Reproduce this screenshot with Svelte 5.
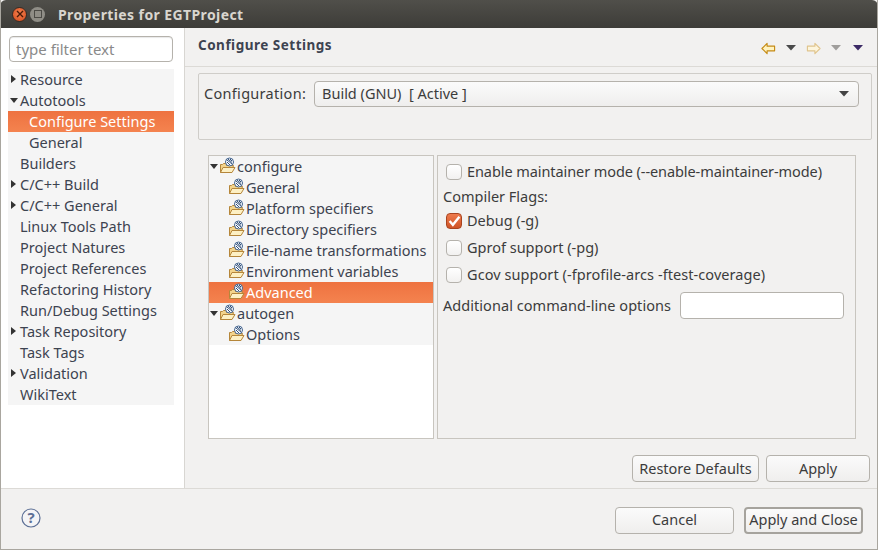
<script>
  const nav = [
    { label: "Resource", arrow: "right" },
    { label: "Autotools", arrow: "down" },
    { label: "Configure Settings", child: true, selected: true },
    { label: "General", child: true },
    { label: "Builders" },
    { label: "C/C++ Build", arrow: "right" },
    { label: "C/C++ General", arrow: "right" },
    { label: "Linux Tools Path" },
    { label: "Project Natures" },
    { label: "Project References" },
    { label: "Refactoring History" },
    { label: "Run/Debug Settings" },
    { label: "Task Repository", arrow: "right" },
    { label: "Task Tags" },
    { label: "Validation", arrow: "right" },
    { label: "WikiText" }
  ];

  const tools = [
    { label: "configure", root: true },
    { label: "General" },
    { label: "Platform specifiers" },
    { label: "Directory specifiers" },
    { label: "File-name transformations" },
    { label: "Environment variables" },
    { label: "Advanced", selected: true },
    { label: "autogen", root: true },
    { label: "Options" }
  ];
</script>

{#snippet folder()}
  <svg class="folder" width="17" height="17" viewBox="0 0 17 17">
    <path d="M1.5 15.5V7.5h2l1-1h3v2h7l-2 7z" fill="#f3d48c" stroke="#b5863a" />
    <path d="M1.5 15.5l2.5-5h12l-3 5z" fill="#fdf0c4" stroke="#b5863a" />
    <circle cx="10.5" cy="5" r="4" fill="#fff" stroke="#3d5f8c" />
    <path d="M8 3l5 4M9 2l4 3.5M8 5l3 3M11 2l2 2" stroke="#2f4f7a" stroke-width="1" />
  </svg>
{/snippet}

{#snippet arrowDown(color)}
  <svg class="arrow" width="10" height="6" viewBox="0 0 10 6"><path d="M0 0h10L5 5.5z" fill={color} /></svg>
{/snippet}

<div class="window">
  <header class="titlebar">
    <span class="wbtn close">
      <svg width="8" height="8" viewBox="0 0 8 8"><path d="M1 1l6 6M7 1l-6 6" stroke="#4a1a08" stroke-width="1.4" /></svg>
    </span>
    <span class="wbtn max"><i></i></span>
    <span class="title">Properties for EGTProject</span>
  </header>

  <div class="body">
    <aside class="side">
      <input class="filter" placeholder="type filter text" />
      <ul class="nav">
        {#each nav as item}
          <li class:child={item.child} class:selected={item.selected}>
            {#if item.arrow === "right"}
              <span class="twist right"></span>
            {:else if item.arrow === "down"}
              <span class="twist down"></span>
            {/if}
            {item.label}
          </li>
        {/each}
      </ul>
    </aside>

    <main class="content">
      <div class="heading">
        <h1>Configure Settings</h1>
        <div class="history">
          <svg width="15" height="13" viewBox="0 0 16 13"><path d="M1 6.5L6.5 1v3h8v5h-8v3z" fill="#fff3c0" stroke="#c58a12" stroke-width="1.2" stroke-linejoin="round" /></svg>
          {@render arrowDown("#4a4a4a")}
          <svg width="15" height="13" viewBox="0 0 16 13"><path d="M15 6.5L9.5 1v3h-8v5h8v3z" fill="#fdf5dc" stroke="#e0c48c" stroke-width="1.2" stroke-linejoin="round" /></svg>
          {@render arrowDown("#a09e9c")}
          <span class="menu">{@render arrowDown("#3c2a66")}</span>
        </div>
      </div>

      <section class="config">
        <span class="config-label">Configuration:</span>
        <div class="combo">
          <span>Build (GNU)&nbsp; [ Active ]</span>
          {@render arrowDown("#444")}
        </div>
      </section>

      <div class="panes">
        <ul class="tree">
          {#each tools as t}
            <li class:root={t.root} class:selected={t.selected}>
              {#if t.root}<span class="twist down"></span>{/if}
              {@render folder()}
              <span>{t.label}</span>
            </li>
          {/each}
        </ul>

        <div class="form">
          <label class="check first"><span class="box"></span><span class="tight">Enable maintainer mode (--enable-maintainer-mode)</span></label>
          <div class="flags">Compiler Flags:</div>
          <label class="check">
            <span class="box on">
              <svg width="13" height="12" viewBox="0 0 12 11"><path d="M1.5 5.5L4.5 9L10.5 1.5" fill="none" stroke="#fff" stroke-width="2.2" /></svg>
            </span>
            Debug (-g)
          </label>
          <label class="check"><span class="box"></span>Gprof support (-pg)</label>
          <label class="check"><span class="box"></span><span class="wide">Gcov support (-fprofile-arcs -ftest-coverage)</span></label>
          <div class="extra">
            <span>Additional command-line options</span>
            <input />
          </div>
        </div>
      </div>

      <div class="actions">
        <button class="restore">Restore Defaults</button>
        <button class="apply">Apply</button>
      </div>
    </main>
  </div>

  <footer class="footer">
    <svg class="help" width="20" height="20" viewBox="0 0 20 20">
      <circle cx="10" cy="10" r="9" fill="#f4f4f6" stroke="#5d7096" stroke-width="1.2" />
      <text x="10" y="15" text-anchor="middle" class="q">?</text>
    </svg>
    <div class="footer-btns">
      <button class="cancel">Cancel</button>
      <button class="default">Apply and Close</button>
    </div>
  </footer>
</div>

<style>
  :global(body) {
    margin: 0;
    background: #f2f1f0;
  }

  .window {
    width: 878px;
    height: 550px;
    display: flex;
    flex-direction: column;
    box-sizing: border-box;
    overflow: hidden;
    background: #f2f1f0;
    color: #3c3c3c;
    font-family: "Noto Sans", "Open Sans", sans-serif;
    font-size: 14.5px;
    border-left: 1px solid #a9a69f;
    border-right: 1px solid #a9a69f;
    border-bottom: 1px solid #a9a69f;
  }

  .titlebar {
    height: 28px;
    margin: 0 -1px;
    flex: none;
    display: flex;
    align-items: center;
    padding-left: 12px;
    background: linear-gradient(#504f4a, #3d3c38);
    border-radius: 6px 6px 0 0;
  }

  .wbtn {
    width: 15px;
    height: 15px;
    border-radius: 50%;
    display: flex;
    align-items: center;
    justify-content: center;
  }

  .close {
    background: radial-gradient(circle at 50% 40%, #f5824f, #d4491c);
    border: 1px solid #3a2a22;
    box-sizing: border-box;
  }

  .max {
    margin-left: 3px;
    background: #8f8d86;
  }

  .max i {
    width: 6px;
    height: 6px;
    border: 1px solid #4c4b46;
  }

  .title {
    margin-left: 13px;
    color: #d9d6cf;
    font-weight: 700;
    font-size: 14px;
    letter-spacing: 0.4px;
  }

  .body {
    flex: 1;
    display: flex;
    min-height: 0;
  }

  .side {
    width: 184px;
    flex: none;
    box-sizing: border-box;
    background: #fff;
    border-right: 1px solid #d8d6d2;
    padding: 8px 0 0 7px;
  }

  .filter {
    display: block;
    width: 164px;
    height: 26px;
    margin-left: 1px;
    box-sizing: border-box;
    padding: 0 6px;
    border: 1px solid #b5b2ac;
    border-radius: 4px;
    background: #fff;
    font: inherit;
    font-size: 15px;
    box-shadow: inset 0 1px 1px #e8e8e8;
  }

  .filter::placeholder {
    color: #8a8a8a;
    opacity: 1;
  }

  .nav,
  .tree {
    list-style: none;
    margin: 0;
    padding: 0;
  }

  .nav {
    margin-top: 7px;
    width: 166px;
    background: #f5f5f5;
  }

  .nav li {
    position: relative;
    height: 21px;
    line-height: 21px;
    padding-left: 12px;
    white-space: nowrap;
    color: #3d4350;
  }

  .nav li.child {
    padding-left: 21px;
  }

  .nav li.selected,
  .tree li.selected {
    background: linear-gradient(#ee7240, #f4834f);
    color: #fff;
  }

  .twist {
    position: absolute;
    width: 0;
    height: 0;
  }

  .twist.right {
    left: 3px;
    top: 6px;
    border-left: 5px solid #333;
    border-top: 4.5px solid transparent;
    border-bottom: 4.5px solid transparent;
  }

  .twist.down {
    left: 2px;
    top: 8px;
    border-top: 5px solid #333;
    border-left: 4.5px solid transparent;
    border-right: 4.5px solid transparent;
  }

  .content {
    flex: 1;
    min-width: 0;
    display: flex;
    flex-direction: column;
  }

  .heading {
    height: 39px;
    flex: none;
    box-sizing: border-box;
    display: flex;
    align-items: center;
    justify-content: space-between;
    padding: 0 14px 4px 13px;
    border-bottom: 1px solid #dcdad6;
  }

  h1 {
    margin: 0;
    font-size: 13.5px;
    font-weight: 700;
    letter-spacing: 0.5px;
    color: #3d4350;
  }

  .history {
    display: flex;
    align-items: center;
    gap: 10px;
    padding-top: 6px;
  }

  .menu {
    display: flex;
    margin-left: 2px;
  }

  .arrow {
    display: block;
  }

  .config {
    flex: none;
    height: 67px;
    box-sizing: border-box;
    margin: 6px 5px 0 13px;
    padding: 7px 12px 0 5px;
    display: flex;
    align-items: flex-start;
    border: 1px solid #cfcdc9;
    border-radius: 2px;
  }

  .config-label {
    width: 110px;
    flex: none;
    line-height: 24px;
    letter-spacing: 0.3px;
  }

  .combo {
    flex: 1;
    height: 26px;
    box-sizing: border-box;
    display: flex;
    align-items: center;
    justify-content: space-between;
    padding: 0 9px 0 7px;
    border: 1px solid #b5b2ac;
    border-radius: 4px;
    background: linear-gradient(#fbfbfb, #efeeed);
  }

  .combo > span {
    line-height: 20px;
    margin-top: -2px;
  }

  .panes {
    flex: none;
    height: 284px;
    margin: 15px 0 0 23px;
    display: flex;
    gap: 3px;
  }

  .tree {
    width: 226px;
    box-sizing: border-box;
    border: 1px solid #c8c5bf;
    background: #fff;
  }

  .tree li {
    position: relative;
    height: 21px;
    box-sizing: border-box;
    display: flex;
    align-items: center;
    padding: 0 0 2px 19px;
    background: #f5f5f5;
    white-space: nowrap;
    color: #3d4350;
  }

  .tree li.root {
    padding-left: 10px;
  }

  .tree li .twist.down {
    left: 1px;
    top: 8px;
  }

  .folder {
    flex: none;
    margin-right: 1px;
  }

  .form {
    width: 419px;
    box-sizing: border-box;
    border: 1px solid #c8c5bf;
    padding: 0 0 0 5px;
  }

  .check {
    display: flex;
    align-items: center;
    height: 27px;
    box-sizing: border-box;
    padding: 0 0 2px 3px;
    white-space: nowrap;
  }

  .check.first {
    height: 31px;
  }

  .tight {
    letter-spacing: -0.08px;
  }

  .wide {
    letter-spacing: 0.07px;
  }

  .flags {
    height: 20px;
    line-height: 18px;
  }

  .box {
    width: 16px;
    height: 16px;
    flex: none;
    box-sizing: border-box;
    margin: 2px 5px 0 0;
    border: 1px solid #b5b2ac;
    border-radius: 4px;
    background: linear-gradient(#fff, #f2f1f0);
    display: flex;
    align-items: center;
    justify-content: center;
  }

  .box.on {
    background: linear-gradient(#ee7a4c, #cf5427);
    border-color: #a9441f;
  }

  .extra {
    display: flex;
    align-items: center;
    justify-content: space-between;
    height: 27px;
    margin: 4px 11px 0 0;
  }

  .extra > span {
    margin-top: -2px;
    letter-spacing: 0.05px;
  }

  .extra input {
    width: 164px;
    height: 27px;
    box-sizing: border-box;
    border: 1px solid #b5b2ac;
    border-radius: 4px;
    background: #fff;
  }

  .actions {
    flex: none;
    display: flex;
    justify-content: flex-end;
    gap: 7px;
    margin: 16px 7px 0 0;
  }

  button {
    height: 27px;
    box-sizing: border-box;
    padding: 0 0 2px;
    border: 1px solid #b5b2ac;
    border-radius: 4px;
    background: linear-gradient(#fbfbfb, #efeeed);
    color: #3c3c3c;
    font: inherit;
  }

  .restore {
    width: 127px;
  }

  .apply {
    width: 104px;
  }

  .footer {
    flex: none;
    height: 61px;
    box-sizing: border-box;
    display: flex;
    align-items: center;
    justify-content: space-between;
    padding: 0 14px 0 20px;
    border-top: 1px solid #dcdad6;
  }

  .help {
    margin-top: -2px;
  }

  .q {
    font-size: 15px;
    font-weight: 700;
    fill: #5d7096;
  }

  .footer-btns {
    display: flex;
    gap: 10px;
    margin-top: 2px;
  }

  .cancel {
    width: 119px;
  }

  .default {
    width: 119px;
    border: 2px solid #a6a39d;
  }
</style>
